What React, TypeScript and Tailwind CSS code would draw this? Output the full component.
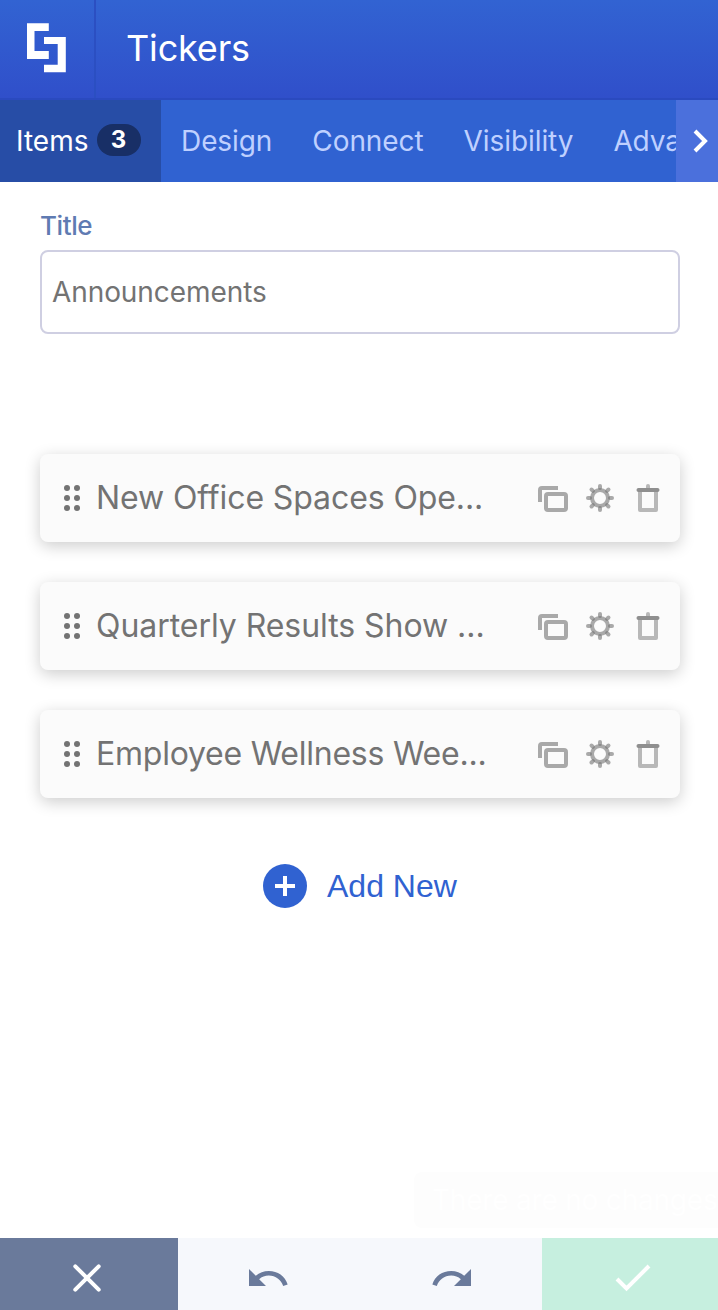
import { useState } from 'react'

const tabs = [
  { id: 'items', label: 'Items', count: 3 },
  { id: 'design', label: 'Design' },
  { id: 'connect', label: 'Connect' },
  { id: 'visibility', label: 'Visibility' },
  { id: 'advanced', label: 'Advanced' },
]

const items = [
  { id: 1, label: 'New Office Spaces Ope...', tracking: 'tracking-[-0.1px]' },
  { id: 2, label: 'Quarterly Results Show ...', tracking: 'tracking-[-0.05px]' },
  { id: 3, label: 'Employee Wellness Wee...', tracking: 'tracking-[-0.24px]' },
]

function Logo() {
  return (
    <svg width="40" height="50" viewBox="0 0 40 50" fill="#fff" aria-hidden="true">
      <path d="M0 .3h21.8V8H7.5v20h14.3v8H0z" />
      <path d="M17 14h21.8v35.3H17v-7.6h13.7V21H17z" />
    </svg>
  )
}

function DragHandle() {
  return (
    <svg width="16" height="26" viewBox="0 0 16 26" fill="#737373" aria-hidden="true">
      {[3, 13].map(cx => [3, 13, 23].map(cy => <circle key={`${cx}-${cy}`} cx={cx} cy={cy} r="3" />))}
    </svg>
  )
}

function CopyIcon() {
  return (
    <svg width="30" height="26" viewBox="0 0 30 26" fill="none" stroke="#a9a9a9" strokeWidth="4" aria-hidden="true">
      <path d="M2 16V4a2 2 0 0 1 2-2h16" />
      <rect x="8" y="8" width="20" height="16" rx="2" />
    </svg>
  )
}

function GearIcon() {
  return (
    <svg width="28" height="28" viewBox="-14 -14 28 28" fill="none" aria-hidden="true">
      <circle r="8" stroke="#a9a9a9" strokeWidth="4" />
      {[0, 45, 90, 135, 180, 225, 270, 315].map(a => (
        <path key={a} d="M0-12v2" stroke="#737373" strokeOpacity=".6" strokeWidth="4" strokeLinecap="round" transform={`rotate(${a})`} />
      ))}
    </svg>
  )
}

function TrashIcon() {
  return (
    <svg width="24" height="28" viewBox="0 0 24 28" fill="none" aria-hidden="true">
      <path d="M4 6v20h16V6" stroke="#b8b8b8" strokeWidth="4" strokeLinejoin="round" />
      <path d="M10 4V2a2 2 0 0 1 4 0v2z" fill="#b8b8b8" />
      <path d="M2.5 6h19" stroke="#8f8f8f" strokeWidth="4" strokeLinecap="round" />
    </svg>
  )
}

function UndoIcon({ className = '' }: { className?: string }) {
  return (
    <svg className={className} width="40" height="17" viewBox="2 7 21.18 9" fill="#6a7a9b" aria-hidden="true">
      <path d="M12.5 8c-2.65 0-5.05.99-6.9 2.6L2 7v9h9l-3.62-3.62c1.39-1.16 3.16-1.88 5.12-1.88 3.54 0 6.55 2.31 7.6 5.5l2.37-.78C21.08 10.65 17.15 8 12.5 8z" />
    </svg>
  )
}

export default function App() {
  const [active, setActive] = useState('items')
  const [title, setTitle] = useState('Announcements')

  return (
    <div className="relative flex h-[1310px] w-[718px] flex-col overflow-hidden bg-white font-['Inter',sans-serif]">
      {/* Header */}
      <header className="flex h-[100px] shrink-0 border-b-2 border-[#2a4abf] bg-linear-to-b from-[#3263d2] to-[#304fca]">
        <div className="flex w-24 items-start border-r-2 border-[#2b4fc2] pt-[23px] pl-[27px]">
          <Logo />
        </div>
        <h1 className="pt-[21px] pl-[30px] text-[36px] leading-[54px] tracking-[-0.15px] text-white">Tickers</h1>
      </header>

      {/* Tabs */}
      <div className="flex h-[82px] shrink-0 bg-[#3062d1]">
        <nav className="flex w-[676px] overflow-hidden">
          {tabs.map(tab => (
            <button
              key={tab.id}
              onClick={() => setActive(tab.id)}
              className={
                active === tab.id
                  ? 'flex w-[161px] shrink-0 items-center gap-[9px] bg-[#274da6] pl-4 text-[28px] text-white'
                  : 'flex shrink-0 items-center px-5 text-[28px] tracking-[-0.08px] text-[#bfd0ff]'
              }
            >
              {tab.label}
              {tab.count && (
                <span className="mb-0.5 flex h-8 w-11 items-center justify-center rounded-full bg-[#182f66] pr-0.5 text-[24px] font-bold text-white">
                  {tab.count}
                </span>
              )}
            </button>
          ))}
        </nav>
        <button className="flex w-[42px] items-center justify-center bg-[#4b70dc] pl-2" aria-label="More tabs">
          <svg width="16" height="24" viewBox="0 0 16 24" fill="none" stroke="#fff" strokeWidth="4">
            <path d="m2 2 10 10L2 22" />
          </svg>
        </button>
      </div>

      {/* Content */}
      <main className="flex flex-1 flex-col px-10 pt-[26px]">
        <label htmlFor="title" className="h-[42px] text-[26px] leading-9 font-medium tracking-[-0.4px] text-[#5f7bb2]">Title</label>
        <input
          id="title"
          value={title}
          onChange={e => setTitle(e.target.value)}
          className="mr-[-2px] h-[84px] w-[640px] rounded-lg border-2 border-[#cfcfe2] bg-white px-2.5 text-[28px] tracking-[-0.08px] text-[#737373] outline-none"
        />

        <ul className="mt-[120px] flex w-[640px] flex-col gap-10">
          {items.map(item => (
            <li
              key={item.id}
              className="flex h-[88px] items-center rounded-lg bg-[#fbfbfb] pr-5 pl-6 shadow-[0_4px_16px_rgba(0,0,0,0.2)]"
            >
              <DragHandle />
              <span className={`ml-4 flex-1 text-[32px] whitespace-nowrap text-[#737373] ${item.tracking}`}>{item.label}</span>
              <div className="flex items-center">
                <button className="mt-0.5 mr-[18px]" aria-label="Duplicate"><CopyIcon /></button>
                <button className="mr-[22px]" aria-label="Settings"><GearIcon /></button>
                <button aria-label="Delete"><TrashIcon /></button>
              </div>
            </li>
          ))}
        </ul>

        <button className="mt-[66px] flex h-11 w-[640px] items-center pl-[223px] font-['Liberation_Sans',Arial,sans-serif] text-[32px] text-[#3062d1]">
          <svg width="44" height="44" viewBox="0 0 44 44" aria-hidden="true">
            <circle cx="22" cy="22" r="22" fill="#3062d1" />
            <path d="M22 12v20M12 22h20" stroke="#fff" strokeWidth="4" />
          </svg>
          <span className="ml-5">Add New</span>
        </button>
      </main>

      {/* Tooltip, fading out */}
      <div className="absolute top-[1172px] left-[414px] flex h-14 w-[304px] items-center rounded-l-lg bg-[#fdfdfd] pl-[18px] text-[28px] tracking-[-0.2px] whitespace-nowrap text-white">
        There are no changes
      </div>

      {/* Footer */}
      <footer className="flex h-[72px] shrink-0 bg-[#f6f8fc]">
        <button className="flex w-[178px] items-center justify-center bg-[#6a7a9b] pt-2 pr-1" aria-label="Close">
          <svg width="28" height="28" viewBox="0 0 28 28" stroke="#fff" strokeWidth="4" strokeLinecap="round">
            <path d="m2.3 2.3 23.4 23.4M25.7 2.3 2.3 25.7" />
          </svg>
        </button>
        <button className="flex w-[182px] items-center pt-[7px] pl-[71px]" aria-label="Undo">
          <UndoIcon />
        </button>
        <button className="flex w-[182px] items-center pt-[7px] pl-[71px]" aria-label="Redo">
          <UndoIcon className="-scale-x-100" />
        </button>
        <button className="flex flex-1 items-center bg-[#c6efdf] pt-2 pl-[73px]" aria-label="Save">
          <svg width="36" height="28" viewBox="0 0 36 28" fill="none" stroke="#fff" strokeWidth="4">
            <path d="m2 15 9.5 9.5L34 2" />
          </svg>
        </button>
      </footer>
    </div>
  )
}
